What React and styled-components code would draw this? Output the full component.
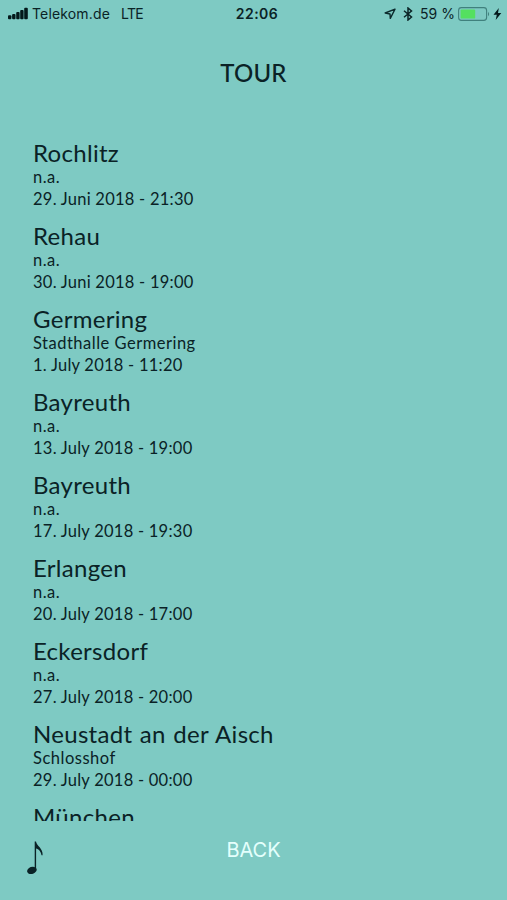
import styled, { createGlobalStyle } from "styled-components";

const concerts = [
  { id: 1, city: "Rochlitz", venue: "n.a.", date: "29. Juni 2018 - 21:30" },
  { id: 2, city: "Rehau", venue: "n.a.", date: "30. Juni 2018 - 19:00" },
  { id: 3, city: "Germering", venue: "Stadthalle Germering", date: "1. July 2018 - 11:20" },
  { id: 4, city: "Bayreuth", venue: "n.a.", date: "13. July 2018 - 19:00" },
  { id: 5, city: "Bayreuth", venue: "n.a.", date: "17. July 2018 - 19:30" },
  { id: 6, city: "Erlangen", venue: "n.a.", date: "20. July 2018 - 17:00" },
  { id: 7, city: "Eckersdorf", venue: "n.a.", date: "27. July 2018 - 20:00" },
  { id: 8, city: "Neustadt an der Aisch", venue: "Schlosshof", date: "29. July 2018 - 00:00" },
  { id: 9, city: "München", venue: "", date: "" },
];

const SignalIcon = () => (
  <svg width="21" height="13" viewBox="0 0 21 13" fill="#04191b">
    <rect x="0" y="8.3" width="3.4" height="4" rx="1" />
    <rect x="4.1" y="7" width="3.4" height="5.3" rx="1" />
    <rect x="8.2" y="5" width="3.4" height="7.3" rx="1" />
    <rect x="12.2" y="3" width="3.4" height="9.3" rx="1" />
    <rect x="16.2" y="0.7" width="3.6" height="11.6" rx="1" />
  </svg>
);

const LocationIcon = () => (
  <svg width="12" height="12" viewBox="0 0 12 12" fill="none" stroke="#0b2a2c" strokeWidth="1.4" strokeLinejoin="round">
    <path d="M11 1.2 L1.2 5 L6 6 L6.3 10.4 Z" />
  </svg>
);

const BluetoothIcon = () => (
  <svg width="10" height="14" viewBox="0 0 10 14" fill="none" stroke="#0b2426" strokeWidth="1.5">
    <path d="M1 3.7 L8.5 10 L5 13 V1 L8.5 4 L1 10.3" />
  </svg>
);

const BatteryIcon = () => (
  <svg width="33" height="14" viewBox="0 0 33 14">
    <rect x="0.6" y="0.6" width="28" height="12.8" rx="2.8" fill="none" stroke="#40807d" strokeWidth="1.1" />
    <rect x="2.6" y="2.4" width="14.6" height="9.2" rx="1.2" fill="#54e060" />
    <path d="M30 4.7 Q32.2 7 30 9.3 Z" fill="#40807d" />
  </svg>
);

const BoltIcon = () => (
  <svg width="9" height="12" viewBox="0 0 9 12" fill="#04191b">
    <path d="M5.8 0 L0.5 6.7 H3.8 L2.7 12 L8.3 4.9 H5 Z" />
  </svg>
);

const NoteIcon = () => (
  <svg width="17" height="34" viewBox="0 0 17 34" fill="#0a2226">
    <ellipse cx="4.9" cy="29.4" rx="4.9" ry="3.5" transform="rotate(-20 4.9 29.4)" />
    <path d="M7.7 0.5 H9 C9.5 5 16.1 7 15.6 14.3 H14.5 C13.8 10 11.5 8 9.1 7.5 V29 H7.7 Z" />
  </svg>
);

function App() {
  return (
    <>
      <GlobalStyle />
      <Screen>
        <StatusBar>
          <StatusSide>
            <SignalIcon />
            <Carrier>Telekom.de</Carrier>
            <Network>LTE</Network>
          </StatusSide>
          <Clock>22:06</Clock>
          <StatusSide $end>
            <LocationIcon />
            <Bluetooth>
              <BluetoothIcon />
            </Bluetooth>
            <Percent>59 %</Percent>
            <BatteryIcon />
            <Charging>
              <BoltIcon />
            </Charging>
          </StatusSide>
        </StatusBar>
        <Title>TOUR</Title>
        <ConcertList>
          {concerts.map((concert) => (
            <Concert key={concert.id}>
              <City>{concert.city}</City>
              <Venue>{concert.venue}</Venue>
              <Detail>{concert.date}</Detail>
            </Concert>
          ))}
        </ConcertList>
        <Footer>
          <NoteButton aria-label="Music">
            <NoteIcon />
          </NoteButton>
          <BackButton>BACK</BackButton>
        </Footer>
      </Screen>
    </>
  );
}

const GlobalStyle = createGlobalStyle`
  body {
    margin: 0;
    background: #7ecac3;
  }
`;

const Screen = styled.div`
  display: flex;
  flex-direction: column;
  width: 507px;
  height: 900px;
  overflow: hidden;
  background: #7ecac3;
  color: #0a2226;
  font-family: Lato, "Liberation Sans", sans-serif;
`;

const StatusBar = styled.header`
  display: grid;
  grid-template-columns: 1fr auto 1fr;
  align-items: center;
  height: 27px;
  padding: 0 5px 0 8px;
  font-family: Inter, "Liberation Sans", sans-serif;
  font-size: 14px;
  line-height: 27px;
`;

const StatusSide = styled.div`
  display: flex;
  align-items: center;
  justify-content: ${(props) => (props.$end ? "flex-end" : "flex-start")};
`;

const Carrier = styled.span`
  margin-left: 3px;
  letter-spacing: 0.15px;
`;

const Network = styled.span`
  margin-left: 11px;
  letter-spacing: -0.6px;
`;

const Clock = styled.span`
  padding-left: 1px;
  font-weight: 600;
  letter-spacing: 0.5px;
  margin-right: -3px;
`;

const Bluetooth = styled.span`
  display: flex;
  margin: 0 -1px 0 7px;
`;

const Percent = styled.span`
  margin: 0 3px 0 8px;
  white-space: nowrap;
`;

const Charging = styled.span`
  display: flex;
  margin-left: 2px;
`;

const Title = styled.h1`
  margin: 31px 0 0;
  font-size: 24px;
  font-weight: 500;
  line-height: 30px;
  letter-spacing: 0.2px;
  text-align: center;
`;

const ConcertList = styled.ul`
  box-sizing: border-box;
  height: 693px;
  margin: 40px 0 0;
  padding: 13px 33px 0;
  overflow: hidden;
  list-style: none;
`;

const Concert = styled.li`
  height: 69px;
  margin-bottom: 14px;
`;

const City = styled.h2`
  margin: 0 0 1px;
  font-size: 24px;
  font-weight: 400;
  line-height: 24px;
  letter-spacing: 0.3px;
  word-spacing: 1px;
`;

const Detail = styled.p`
  margin: 0;
  font-size: 16.5px;
  line-height: 22px;
  letter-spacing: 0.25px;
`;

const Venue = styled(Detail)`
  letter-spacing: 0.5px;
`;

const Footer = styled.footer`
  display: grid;
  grid-template-columns: 1fr auto 1fr;
  align-items: start;
  padding: 0 27px;
`;

const NoteButton = styled.button`
  justify-self: start;
  display: flex;
  margin-top: 20px;
  padding: 0;
  border: none;
  background: none;
`;

const BackButton = styled.button`
  margin-top: 15px;
  padding: 0;
  border: none;
  background: none;
  color: #e4fffc;
  font-family: Inter, "Liberation Sans", sans-serif;
  font-size: 20px;
  line-height: 28px;
`;

export default App;
